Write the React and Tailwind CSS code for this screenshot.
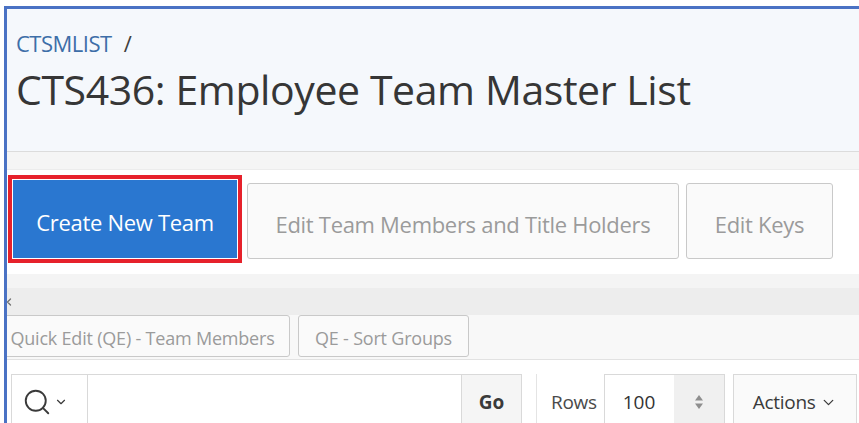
import React from 'react';
import { Search, ChevronDown, ChevronLeft } from 'lucide-react';

const font = { fontFamily: '"Open Sans", "Noto Sans", sans-serif' };

function GhostButton({ children, className = '' }) {
  return (
    <button
      type="button"
      className={`flex items-center justify-center border border-[#c9c9c9] rounded-[3px] bg-[#fafafa] text-[#9b9b9b] ${className}`}
    >
      {children}
    </button>
  );
}

// small up/down arrows of the rows select
function Spinner() {
  return (
    <svg width="10" height="16" viewBox="0 0 10 16" fill="#8e8e8e">
      <path d="M5 1 L9 6.5 H1 Z" />
      <path d="M5 15 L9 9.5 H1 Z" />
    </svg>
  );
}

export default function App() {
  return (
    <div className="w-[859px] h-[423px] bg-white pt-[6px] pl-[4px] overflow-hidden" style={font}>
      <div className="h-[417px] border-l-[3px] border-t-[3px] border-[#4a72c4] overflow-hidden">
        {/* page header */}
        <div className="h-[143px] bg-[#f5f8fc] pl-[9px] pt-[23px] border-b border-[#dcdcdc]">
          <div className="flex items-center text-[22px] leading-none">
            <span className="text-[#3d6ea8] tracking-[-0.5px]">CTSMLIST</span>
            <span className="ml-[12px] text-[#404040]">/</span>
          </div>
          <h1 className="mt-[15px] text-[41px] leading-none text-[#363636] tracking-[-0.4px]">
            CTS436: Employee Team Master List
          </h1>
        </div>

        <div className="h-[18px] bg-[#f5f5f5] border-b border-[#ececec]" />

        {/* button bar */}
        <div className="h-[104px] bg-white flex items-start pl-[1px]">
          <div className="mt-[5px] border-[4px] border-[#e6212b] p-[1px] bg-white">
            <button
              type="button"
              className="w-[224px] h-[78px] pt-[7px] bg-[#2a77d0] text-white text-[22px] tracking-[-0.3px]"
            >
              Create New Team
            </button>
          </div>
          <GhostButton className="ml-[5px] mt-[13px] w-[432px] h-[76px] pt-[6px] text-[22px] tracking-[-0.3px]">
            Edit Team Members and Title Holders
          </GhostButton>
          <GhostButton className="ml-[7px] mt-[13px] w-[147px] h-[76px] pt-[6px] text-[22px] tracking-[-0.3px]">
            Edit Keys
          </GhostButton>
        </div>

        {/* region header */}
        <div className="h-[14px] bg-[#f4f4f4]" />
        <div className="h-[27px] bg-[#ededed] flex items-center">
          <ChevronLeft size={12} strokeWidth={2.5} className="-ml-[4px] text-[#707070]" />
        </div>

        {/* report buttons */}
        <div className="h-[45px] bg-[#f8f8f8] border-b border-[#e2e2e2] flex items-start gap-[8px] -ml-[12px]">
          <GhostButton className="w-[295px] h-[42px] pt-[5px] text-[18px] tracking-[-0.2px]">
            Quick Edit (QE) - Team Members
          </GhostButton>
          <GhostButton className="w-[171px] h-[42px] pt-[5px] text-[18px] tracking-[-0.2px]">
            QE - Sort Groups
          </GhostButton>
        </div>

        {/* search toolbar */}
        <div className="mt-[14px] flex items-start h-[52px] pl-[4px]">
          <div className="w-[77px] h-[52px] border border-[#d9d9d9] flex items-center pt-[4px] pl-[10px] gap-[2px] text-[#3a3a3a]">
            <Search size={30} strokeWidth={1.5} />
            <ChevronDown size={14} strokeWidth={2} />
          </div>
          <div className="w-[373px] h-[52px] border-y border-[#d9d9d9] bg-white" />
          <div className="w-[61px] h-[52px] pt-[5px] border border-[#d9d9d9] bg-[#f5f5f5] flex items-center justify-center text-[19px] font-bold text-[#3a3a3a]">
            Go
          </div>
          <div className="ml-[14px] w-px h-[52px] bg-[#e4e4e4]" />
          <div className="ml-[14px] h-[52px] pt-[5px] flex items-center text-[19px] text-[#4a4a4a] tracking-[-0.3px]">
            Rows
          </div>
          <div className="ml-[7px] flex h-[52px] border border-[#d9d9d9]">
            <div className="w-[69px] pt-[5px] bg-white flex items-center pl-[18px] text-[19px] text-[#333]">100</div>
            <div className="w-[50px] pt-[4px] bg-[#f0f0f0] flex items-center justify-center">
              <Spinner />
            </div>
          </div>
          <div className="ml-[8px] w-[124px] h-[52px] pt-[5px] border border-[#d9d9d9] bg-[#fafafa] flex items-center justify-center gap-[4px] text-[19px] text-[#3a3a3a] tracking-[-0.3px]">
            Actions
            <ChevronDown size={17} strokeWidth={1.8} />
          </div>
        </div>
      </div>
    </div>
  );
}
